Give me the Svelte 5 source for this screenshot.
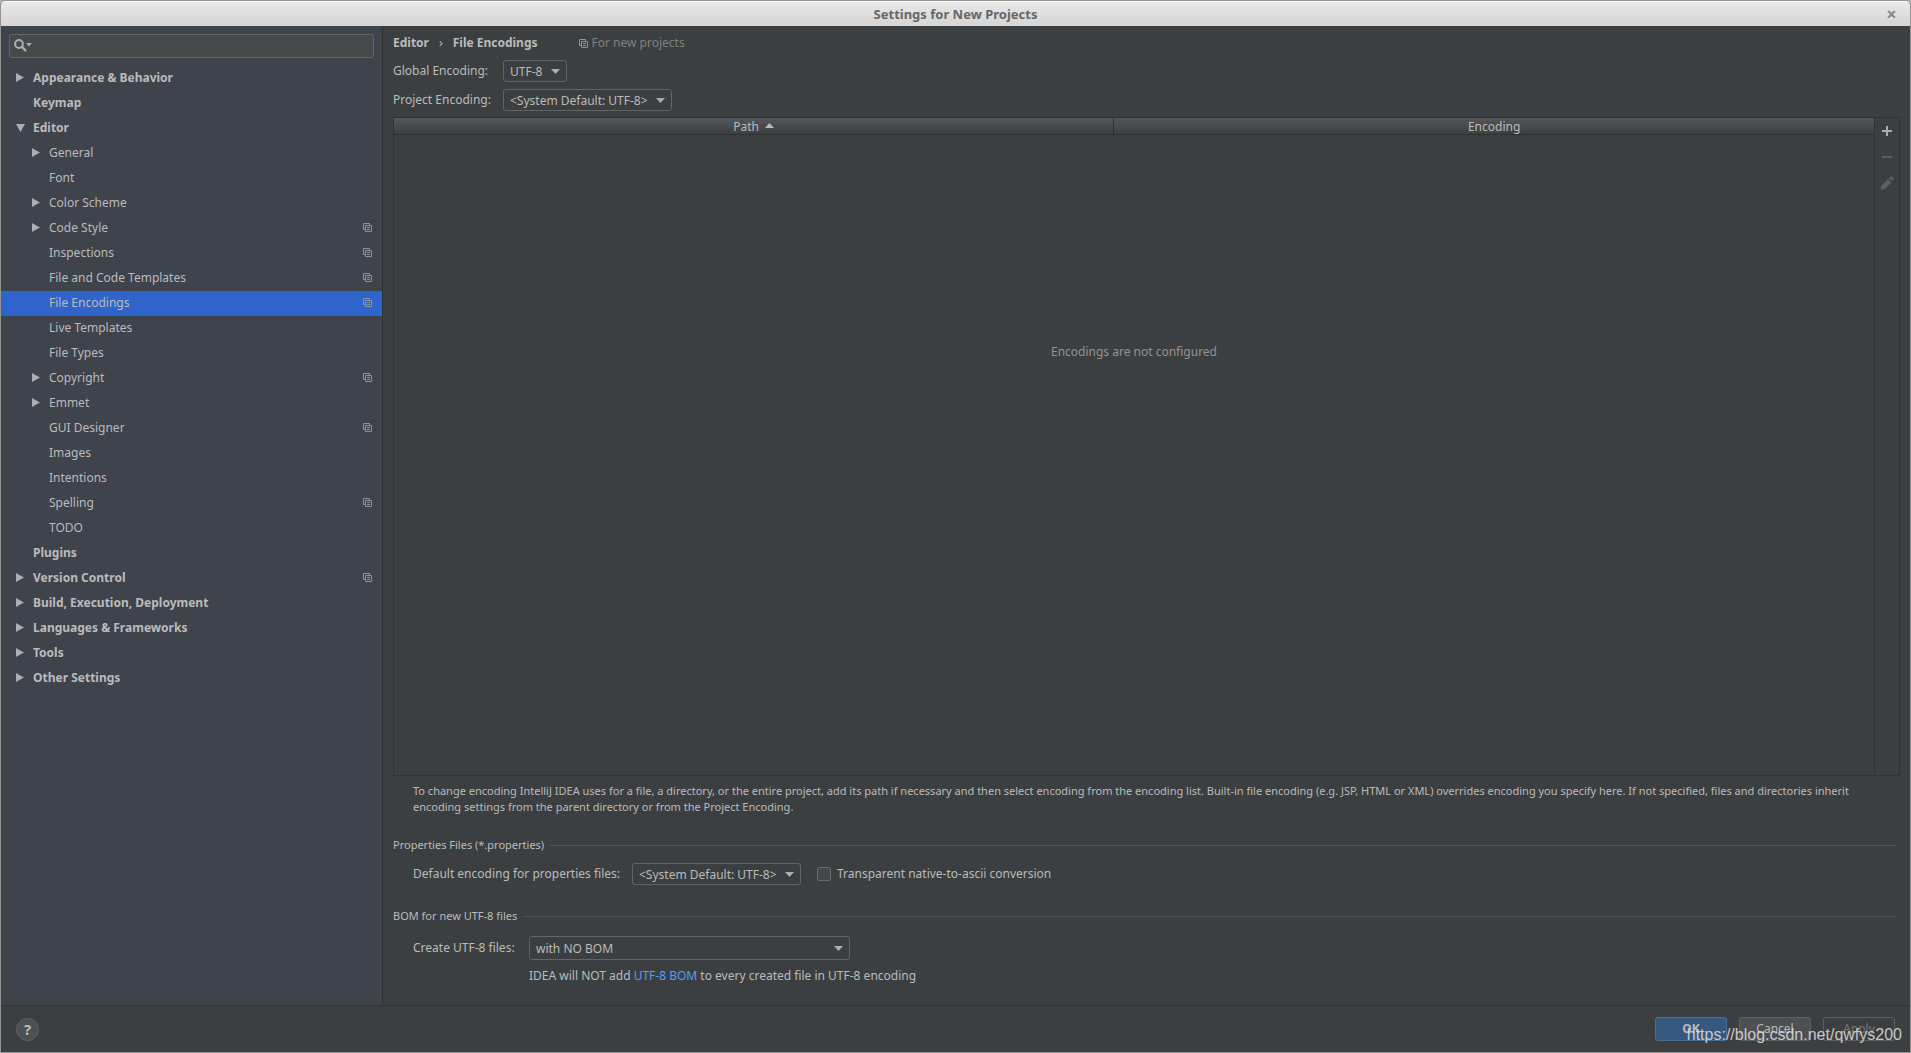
<script lang="ts">
    interface TreeItem {
        label: string;
        level: number;
        state?: "open" | "closed";
        project?: boolean;
    }

    const items: TreeItem[] = [
        { label: "Appearance & Behavior", level: 0, state: "closed" },
        { label: "Keymap", level: 0 },
        { label: "Editor", level: 0, state: "open" },
        { label: "General", level: 1, state: "closed" },
        { label: "Font", level: 1 },
        { label: "Color Scheme", level: 1, state: "closed" },
        { label: "Code Style", level: 1, state: "closed", project: true },
        { label: "Inspections", level: 1, project: true },
        { label: "File and Code Templates", level: 1, project: true },
        { label: "File Encodings", level: 1, project: true },
        { label: "Live Templates", level: 1 },
        { label: "File Types", level: 1 },
        { label: "Copyright", level: 1, state: "closed", project: true },
        { label: "Emmet", level: 1, state: "closed" },
        { label: "GUI Designer", level: 1, project: true },
        { label: "Images", level: 1 },
        { label: "Intentions", level: 1 },
        { label: "Spelling", level: 1, project: true },
        { label: "TODO", level: 1 },
        { label: "Plugins", level: 0 },
        { label: "Version Control", level: 0, state: "closed", project: true },
        { label: "Build, Execution, Deployment", level: 0, state: "closed" },
        { label: "Languages & Frameworks", level: 0, state: "closed" },
        { label: "Tools", level: 0, state: "closed" },
        { label: "Other Settings", level: 0, state: "closed" },
    ];

    let selected = $state("File Encodings");
    let search = $state("");
    let transparent = $state(false);
</script>

{#snippet copyIcon()}
    <svg class="copy-icon" width="9" height="9" viewBox="0 0 9 9" aria-hidden="true">
        <path d="M2 6.5H.5V.5h6V2M2.5 2.5h6v6h-6zM4 4.5h3M4 6.5h3" fill="none" stroke="currentColor" />
    </svg>
{/snippet}

{#snippet dropdown(id: string, value: string)}
    <span class="dropdown">
        <select {id}>
            <option>{value}</option>
        </select>
        <svg width="9" height="5" viewBox="0 0 9 5" aria-hidden="true">
            <path d="M0 0h9L4.5 5z" fill="currentColor" />
        </svg>
    </span>
{/snippet}

<div class="window">
    <header class="titlebar">
        <h1>Settings for New Projects</h1>
        <button class="close" aria-label="Close">
            <svg width="9" height="9" viewBox="0 0 9 9">
                <path d="M1.5 2.5l6 6M7.5 2.5l-6 6" stroke="#fff" stroke-width="2.4" />
                <path d="M1.2 1.2l6.6 6.6M7.8 1.2L1.2 7.8" stroke="#8e8e8e" stroke-width="2.4" />
            </svg>
        </button>
    </header>

    <div class="content">
        <aside class="sidebar">
            <label class="search">
                <svg width="18" height="13" viewBox="0 0 18 13" aria-hidden="true">
                    <circle cx="5" cy="5" r="3.9" fill="none" stroke="currentColor" stroke-width="2" />
                    <path d="M7.6 7.6l4.4 4.4" stroke="currentColor" stroke-width="2.4" />
                    <path d="M12 4h6l-3 3.6z" fill="currentColor" />
                </svg>
                <input type="text" aria-label="Search settings" bind:value={search} />
            </label>
            <nav class="tree">
                {#each items as item}
                    <button
                        class="tree-item"
                        class:child={item.level === 1}
                        class:selected={item.label === selected}
                        onclick={() => (selected = item.label)}
                    >
                        <span class="arrow">
                            {#if item.state === "open"}
                                <svg width="9" height="8" viewBox="0 0 9 8"><path d="M0 0h9L4.5 8z" fill="currentColor" /></svg>
                            {:else if item.state === "closed"}
                                <svg width="8" height="9" viewBox="0 0 8 9"><path d="M0 0v9l8-4.5z" fill="currentColor" /></svg>
                            {/if}
                        </span>
                        <span class="label">{item.label}</span>
                        {#if item.project}
                            {@render copyIcon()}
                        {/if}
                    </button>
                {/each}
            </nav>
        </aside>

        <main class="panel">
            <div class="breadcrumb">
                <strong>Editor</strong>
                <span class="separator">›</span>
                <strong>File Encodings</strong>
                <span class="scope">{@render copyIcon()}For new projects</span>
            </div>

            <div class="encodings">
                <label for="global-encoding">Global Encoding:</label>
                {@render dropdown("global-encoding", "UTF-8")}
                <label for="project-encoding">Project Encoding:</label>
                {@render dropdown("project-encoding", "<System Default: UTF-8>")}
            </div>

            <section class="table-box">
                <div class="table-area">
                    <table>
                        <thead>
                            <tr>
                                <th class="path">
                                    Path
                                    <svg width="9" height="5" viewBox="0 0 9 5" aria-hidden="true">
                                        <path d="M0 5h9L4.5 0z" fill="currentColor" />
                                    </svg>
                                </th>
                                <th>Encoding</th>
                            </tr>
                        </thead>
                    </table>
                    <p class="empty">Encodings are not configured</p>
                </div>
                <div class="toolbar">
                    <button aria-label="Add">
                        <svg width="14" height="14" viewBox="0 0 14 14"><path d="M2 7h10M7 2v10" stroke="currentColor" stroke-width="2" /></svg>
                    </button>
                    <button aria-label="Remove" disabled>
                        <svg width="14" height="14" viewBox="0 0 14 14"><path d="M2 7h10" stroke="currentColor" stroke-width="2" /></svg>
                    </button>
                    <button aria-label="Edit" disabled>
                        <svg width="14" height="14" viewBox="0 0 14 14">
                            <path d="M1 10l7-7 3.4 3.4-7 7H1zM9 2l1.2-1.1c.8-.7 1.6-.6 2.3 0l.7.7c.6.7.7 1.5 0 2.2L12.2 5z" fill="currentColor" />
                        </svg>
                    </button>
                </div>
            </section>

            <p class="hint">
                To change encoding IntelliJ IDEA uses for a file, a directory, or the entire project, add its path if necessary and then
                select encoding from the encoding list. Built-in file encoding (e.g. JSP, HTML or XML) overrides encoding you specify
                here. If not specified, files and directories inherit encoding settings from the parent directory or from the Project
                Encoding.
            </p>

            <h2>Properties Files (*.properties)</h2>
            <div class="row">
                <label for="properties-encoding">Default encoding for properties files:</label>
                {@render dropdown("properties-encoding", "<System Default: UTF-8>")}
                <label class="check">
                    <input type="checkbox" bind:checked={transparent} />
                    Transparent native-to-ascii conversion
                </label>
            </div>

            <h2>BOM for new UTF-8 files</h2>
            <div class="bom">
                <label for="bom">Create UTF-8 files:</label>
                {@render dropdown("bom", "with NO BOM")}
                <p>IDEA will NOT add <a href="#bom">UTF-8 BOM</a> to every created file in UTF-8 encoding</p>
            </div>
        </main>
    </div>

    <footer class="footer">
        <button class="help" aria-label="Help">?</button>
        <div class="actions">
            <button class="primary">OK</button>
            <button>Cancel</button>
            <button disabled>Apply</button>
        </div>
    </footer>
    <span class="watermark">https://blog.csdn.net/qwfys200</span>
</div>

<style>
    :global(body) {
        margin: 0;
        background: #b4b4b4;
    }

    .window {
        position: relative;
        box-sizing: border-box;
        display: flex;
        flex-direction: column;
        min-height: 100vh;
        border: 1px solid #969492;
        border-radius: 5px 5px 0 0;
        overflow: hidden;
        background: #3c3f41;
        color: #bbbbbb;
        font-family: "Noto Sans", sans-serif;
        font-size: 12px;
        line-height: 18px;
    }

    h1,
    h2,
    p {
        margin: 0;
    }

    svg {
        display: block;
        flex: none;
    }

    button,
    input,
    select {
        box-sizing: border-box;
        margin: 0;
        padding: 0;
        border: none;
        background: none;
        color: inherit;
        font: inherit;
    }

    .titlebar {
        display: grid;
        grid-template-columns: 1fr auto 1fr;
        align-items: center;
        box-sizing: border-box;
        height: 25px;
        border-top: 1px solid #ffffff;
        background: linear-gradient(#e8e8e8, #d5d5d5);
    }

    h1 {
        grid-column: 2;
        color: #666666;
        font-size: 13px;
        line-height: 18px;
    }

    .close {
        justify-self: end;
        margin-right: 14px;
    }

    .content {
        flex: 1;
        display: flex;
        border-bottom: 1px solid #323232;
    }

    .sidebar {
        flex: none;
        box-sizing: border-box;
        width: 382px;
        border-right: 1px solid #323232;
        background: #3f434c;
    }

    .search {
        display: flex;
        align-items: center;
        box-sizing: border-box;
        height: 24px;
        margin: 8px;
        padding: 0 0 2px 4px;
        border: 1px solid #646464;
        border-radius: 3px;
        background: #45494a;
        color: #adadad;
    }

    .search input {
        flex: 1;
        min-width: 0;
        padding: 0 4px;
        outline: none;
    }

    .tree {
        display: flex;
        flex-direction: column;
    }

    .tree-item {
        display: flex;
        align-items: center;
        height: 25px;
        padding: 0 10px 2px 15px;
        font-weight: bold;
        text-align: left;
    }

    .tree-item.child {
        padding-left: 31px;
        font-weight: normal;
    }

    .tree-item.selected {
        background: #2f65ca;
    }

    .arrow {
        width: 17px;
        color: #adadad;
    }

    .label {
        flex: 1;
    }

    .copy-icon {
        color: #8c939b;
    }

    .panel {
        flex: 1;
        display: flex;
        flex-direction: column;
        min-width: 0;
        padding: 8px 10px 20px;
    }

    .breadcrumb {
        display: flex;
        align-items: center;
        height: 18px;
    }

    .separator {
        margin: 0 10px;
    }

    .scope {
        display: flex;
        align-items: center;
        gap: 4px;
        margin-left: 41px;
        color: #808080;
    }

    .encodings {
        display: grid;
        grid-template-columns: 110px auto;
        justify-content: start;
        justify-items: start;
        align-items: center;
        row-gap: 7px;
        margin: 8px 0 6px;
    }

    .dropdown {
        display: grid;
        align-items: center;
    }

    .dropdown select,
    .dropdown svg {
        grid-area: 1 / 1;
    }

    .dropdown select {
        appearance: none;
        height: 22px;
        padding: 1px 23px 0 6px;
        border: 1px solid #646464;
        border-radius: 3px;
        background: #3c3f41;
    }

    .dropdown svg {
        justify-self: end;
        margin-right: 7px;
        color: #adadad;
        pointer-events: none;
    }

    .table-box {
        flex: 1;
        display: flex;
        border: 1px solid #323232;
    }

    .table-area {
        flex: 1;
        display: flex;
        flex-direction: column;
    }

    table {
        width: 100%;
        border-collapse: collapse;
        table-layout: fixed;
    }

    th {
        height: 14px;
        padding: 2px 0 0;
        border-bottom: 1px solid #2f3133;
        background: linear-gradient(#53565a, #3c3f41);
        font-weight: normal;
        line-height: 14px;
    }

    th.path {
        width: 48.6%;
        border-right: 1px solid #2f3133;
    }

    th svg {
        display: inline-block;
        margin: 0 0 3px 3px;
    }

    .empty {
        margin-top: 208px;
        color: #939393;
        text-align: center;
    }

    .toolbar {
        display: flex;
        flex-direction: column;
        align-items: center;
        gap: 12px;
        width: 24px;
        padding-top: 6px;
        border-left: 1px solid #323232;
        color: #adadad;
    }

    .toolbar button:disabled {
        color: #5e5e5e;
    }

    .hint {
        margin: 7px 20px 21px;
        font-size: 11px;
        line-height: 16px;
    }

    h2 {
        display: flex;
        align-items: center;
        gap: 6px;
        margin-right: 4px;
        font-size: 11px;
        font-weight: normal;
        line-height: 18px;
    }

    h2::after {
        content: "";
        flex: 1;
        height: 1px;
        background: #515355;
    }

    .row {
        display: flex;
        align-items: center;
        margin: 9px 20px 22px;
    }

    .row .dropdown {
        margin-left: 12px;
    }

    .check {
        display: flex;
        align-items: center;
        gap: 6px;
        margin-left: 16px;
    }

    .check input {
        appearance: none;
        width: 14px;
        height: 14px;
        border: 1px solid #6b6b6b;
        border-radius: 2px;
        background: #43494a;
    }

    .check input:checked {
        background: #2f65ca;
    }

    .bom {
        display: grid;
        grid-template-columns: 116px 321px;
        align-items: center;
        row-gap: 7px;
        margin: 11px 20px 0;
    }

    .bom select {
        height: 24px;
    }

    .bom p {
        grid-column: 2;
        white-space: nowrap;
    }

    a {
        color: #589df6;
        text-decoration: none;
    }

    .footer {
        display: flex;
        justify-content: space-between;
        align-items: center;
        box-sizing: border-box;
        height: 46px;
        padding: 0 15px;
    }

    .help {
        width: 23px;
        height: 23px;
        border: 1px solid #5e6162;
        border-radius: 50%;
        background: #4c5052;
        font-size: 15px;
        font-weight: bold;
        line-height: 20px;
    }

    .actions {
        display: flex;
        gap: 12px;
    }

    .actions button {
        width: 72px;
        height: 24px;
        border: 1px solid #5e6060;
        border-radius: 3px;
        background: #4c5052;
    }

    .actions .primary {
        border-color: #4c708c;
        background: #365880;
        font-weight: bold;
    }

    .actions button:disabled {
        background: #3c3f41;
        color: #777777;
    }

    .watermark {
        position: absolute;
        right: 8px;
        bottom: 8px;
        color: rgba(225, 225, 225, 0.85);
        font-family: "Liberation Sans", Arial, sans-serif;
        font-size: 16px;
        pointer-events: none;
    }
</style>
